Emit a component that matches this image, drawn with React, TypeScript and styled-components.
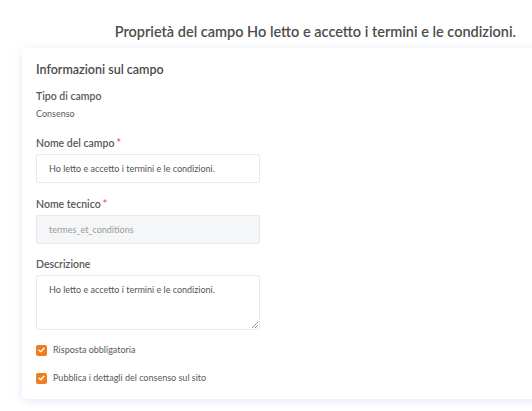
import React from 'react';
import styled, { createGlobalStyle } from 'styled-components';

const GlobalStyle = createGlobalStyle`
  html, body {
    margin: 0;
    padding: 0;
    background: #fff;
    font-family: "Lato", "Noto Sans", sans-serif;
    color: #4a4a4a;
  }
`;

const Page = styled('div')`
  width: 532px;
  height: 411px;
  overflow: hidden;
`;

const Title = styled('h1')`
  margin: 0;
  padding: 22px 16px 0 0;
  text-align: right;
  font-size: 14.5px;
  font-weight: 600;
  color: #4d4d4d;
  line-height: 20px;
  white-space: nowrap;
`;

const Card = styled('div')`
  margin: 6px 0 0 22px;
  width: 540px;
  background: #fff;
  box-shadow: 0 2px 10px rgba(190, 205, 240, 0.45);
  border-radius: 4px;
  padding: 13px 14px 14px;
  box-sizing: border-box;
`;

const CardTitle = styled('h2')`
  margin: 0 0 10px;
  font-size: 12.5px;
  font-weight: 600;
  line-height: 18px;
  color: #4a4a4a;
`;

const Field = styled('div')<{ $gap?: number }>`
  display: flex;
  flex-direction: column;
  margin-bottom: ${p => p.$gap ?? 14}px;
`;

const Label = styled('label')`
  font-size: 10.5px;
  font-weight: 600;
  color: #585858;
  line-height: 14px;
  margin-bottom: 4px;
`;

const Star = styled('span')`
  color: #f0505a;
  margin-left: 2px;
`;

const Value = styled('div')`
  font-size: 9px;
  color: #5a5a5a;
  line-height: 14px;
`;

const Input = styled('div')<{ $disabled?: boolean }>`
  width: 224px;
  height: 29px;
  box-sizing: border-box;
  border: 1px solid #e3e8f2;
  border-radius: 2px;
  background: ${p => (p.$disabled ? '#f5f6f8' : '#fff')};
  color: ${p => (p.$disabled ? '#9a9a9a' : '#555')};
  font-size: 9px;
  padding: 0 12px;
  display: flex;
  align-items: center;
`;

const TextArea = styled('div')`
  position: relative;
  width: 224px;
  height: 55px;
  box-sizing: border-box;
  border: 1px solid #e3e8f2;
  border-radius: 2px;
  font-size: 9px;
  color: #555;
  padding: 8px 12px;
`;

const Grip = styled('svg')`
  position: absolute;
  right: 1px;
  bottom: 1px;
`;

const CheckRow = styled('div')<{ $top?: number }>`
  display: flex;
  align-items: center;
  gap: 6px;
  font-size: 9px;
  line-height: 14px;
  color: #5a5a5a;
  margin-top: ${p => p.$top ?? 0}px;
`;

const Box = styled('span')`
  width: 11px;
  height: 11px;
  border-radius: 2px;
  background: #f07d1e;
  display: flex;
  align-items: center;
  justify-content: center;
`;

const Check = () => (
  <Box>
    <svg width="7" height="6" viewBox="0 0 7 6">
      <path d="M1 3.2 L2.8 4.8 L6 1.2" stroke="#fff" strokeWidth="1.4" fill="none" strokeLinecap="round" strokeLinejoin="round" />
    </svg>
  </Box>
);

export default function App() {
  return (
    <Page>
      <GlobalStyle />
      <Title>Proprietà del campo Ho letto e accetto i termini e le condizioni.</Title>
      <Card>
        <CardTitle>Informazioni sul campo</CardTitle>
        <Field $gap={15}>
          <Label>Tipo di campo</Label>
          <Value>Consenso</Value>
        </Field>
        <Field>
          <Label>Nome del campo<Star>*</Star></Label>
          <Input>Ho letto e accetto i termini e le condizioni.</Input>
        </Field>
        <Field $gap={13}>
          <Label>Nome tecnico<Star>*</Star></Label>
          <Input $disabled>termes_et_conditions</Input>
        </Field>
        <Field $gap={13}>
          <Label>Descrizione</Label>
          <TextArea>
            Ho letto e accetto i termini e le condizioni.
            <Grip width="6" height="6" viewBox="0 0 6 6">
              <path d="M6 0 L0 6 M6 3 L3 6" stroke="#999" strokeWidth="1" />
            </Grip>
          </TextArea>
        </Field>
        <CheckRow>
          <Check />
          Risposta obbligatoria
        </CheckRow>
        <CheckRow $top={14}>
          <Check />
          Pubblica i dettagli del consenso sul sito
        </CheckRow>
      </Card>
    </Page>
  );
}
